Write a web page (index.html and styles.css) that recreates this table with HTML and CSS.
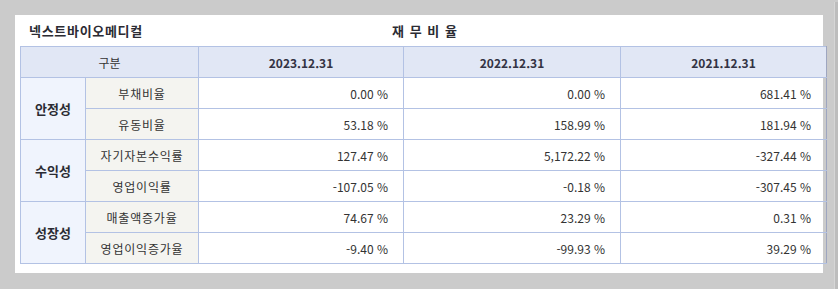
FILE: index.html
```html
<!DOCTYPE html>
<html lang="ko">
<head>
<meta charset="utf-8">
<link rel="stylesheet" href="styles.css">
</head>
<body>
<div class="panel">
  <div class="title-row">
    <div class="company">넥스트바이오메디컬</div>
    <div class="title">재 무 비 율</div>
    <div class="spacer"></div>
  </div>
  <table class="ratio">
    <colgroup>
      <col class="c-cat"><col class="c-label"><col class="c-v1"><col class="c-v2"><col class="c-v3">
    </colgroup>
    <thead>
      <tr>
        <th colspan="2" class="h-gubun">구분</th>
        <th>2023.12.31</th>
        <th>2022.12.31</th>
        <th class="last">2021.12.31</th>
      </tr>
    </thead>
    <tbody>
      <tr>
        <th rowspan="2" class="cat">안정성</th>
        <td class="label">부채비율</td>
        <td class="num">0.00 %</td>
        <td class="num">0.00 %</td>
        <td class="num last">681.41 %</td>
      </tr>
      <tr>
        <td class="label">유동비율</td>
        <td class="num">53.18 %</td>
        <td class="num">158.99 %</td>
        <td class="num last">181.94 %</td>
      </tr>
      <tr>
        <th rowspan="2" class="cat">수익성</th>
        <td class="label">자기자본수익률</td>
        <td class="num">127.47 %</td>
        <td class="num">5,172.22 %</td>
        <td class="num last">-327.44 %</td>
      </tr>
      <tr>
        <td class="label">영업이익률</td>
        <td class="num">-107.05 %</td>
        <td class="num">-0.18 %</td>
        <td class="num last">-307.45 %</td>
      </tr>
      <tr>
        <th rowspan="2" class="cat">성장성</th>
        <td class="label">매출액증가율</td>
        <td class="num">74.67 %</td>
        <td class="num">23.29 %</td>
        <td class="num last">0.31 %</td>
      </tr>
      <tr>
        <td class="label">영업이익증가율</td>
        <td class="num">-9.40 %</td>
        <td class="num">-99.93 %</td>
        <td class="num last">39.29 %</td>
      </tr>
    </tbody>
  </table>
</div>
<div class="scrollbar"></div>
</body>
</html>
```
FILE: styles.css
```css
html, body {
  margin: 0;
  padding: 0;
}
body {
  background: #cbcbcb;
  width: 838px;
  height: 289px;
  overflow: hidden;
  position: relative;
  font-family: "Noto Sans CJK KR", "Noto Sans", sans-serif;
  font-size: 12px;
  color: #333;
}
.panel {
  margin: 15px 0 0 15px;
  width: 808px;
  height: 258px;
  background: #fff;
  padding: 0 0 0 5px;
  box-sizing: border-box;
}
.title-row {
  height: 31px;
  display: grid;
  grid-template-columns: 1fr auto 1fr;
  align-items: center;
  padding-left: 9px;
  color: #2b2b33;
  font-weight: bold;
  font-size: 13px;
}
.company {
  letter-spacing: 0.7px;
}
.title {
  letter-spacing: 1px;
  padding-right: 2px;
}
.ratio {
  border-collapse: collapse;
  table-layout: fixed;
  width: 806px;
}
.c-cat { width: 65px; }
.c-label { width: 113px; }
.c-v1 { width: 205px; }
.c-v2 { width: 217px; }
.c-v3 { width: 206px; }
.ratio tr {
  height: 31px;
}
.ratio th, .ratio td {
  border: 1px solid #b3c2e4;
  padding: 0;
  height: 30px;
  box-sizing: border-box;
  vertical-align: middle;
}
.ratio thead th {
  background: #e1e7f5;
  font-weight: bold;
  color: #333344;
  text-align: center;
}
.ratio thead th.h-gubun {
  font-weight: normal;
  color: #333;
}
.ratio .last {
  border-right-color: #9ea6c0;
}
.ratio th.cat {
  background: #f0f4fd;
  font-weight: bold;
  font-size: 13px;
  color: #2b2b33;
  text-align: center;
}
.ratio td.label {
  background: #f4f4f0;
  text-align: center;
  letter-spacing: 0.8px;
}
.ratio td.num {
  text-align: right;
  padding-right: 15px;
}
.scrollbar {
  position: absolute;
  right: 0;
  top: 2px;
  bottom: 0;
  width: 3px;
  background: #bdbdbd;
  border-left: 1px solid #d6d6d6;
}
```
